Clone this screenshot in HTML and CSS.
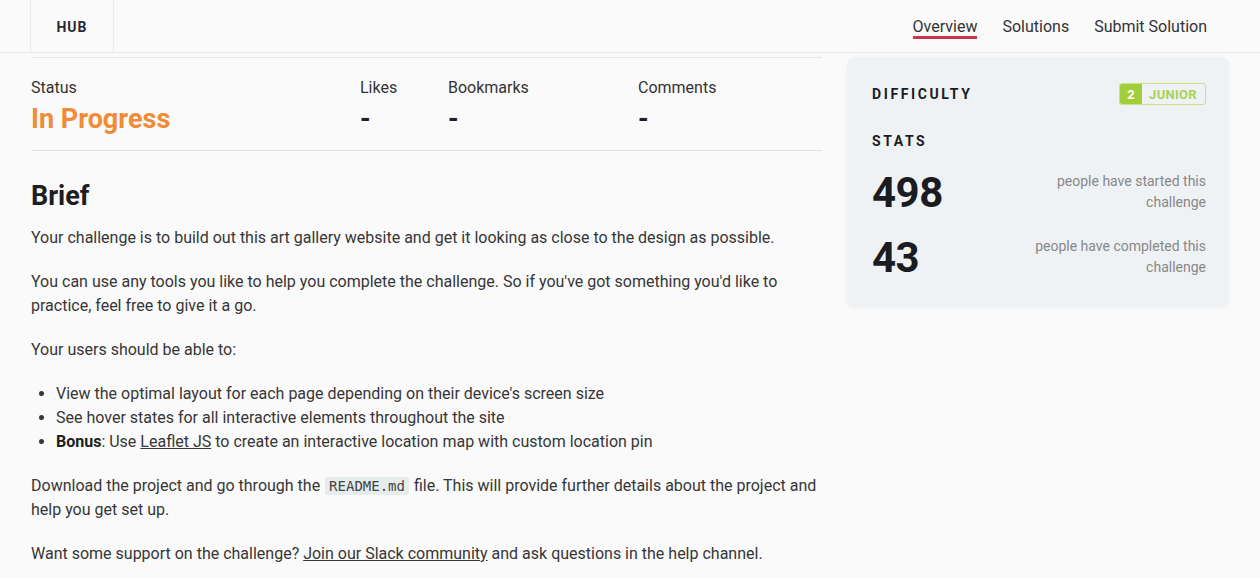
FILE: index.html
```html
<!DOCTYPE html>
<html lang="en">
<head>
<meta charset="utf-8">
<title>Challenge Hub</title>
<link rel="stylesheet" href="styles.css">
</head>
<body>
<header class="topbar">
  <div class="brand">HUB</div>
  <nav class="tabs">
    <a class="tab active" href="#">Overview</a>
    <a class="tab" href="#">Solutions</a>
    <a class="tab" href="#">Submit Solution</a>
  </nav>
</header>
<main class="layout">
  <section class="content">
    <div class="meta">
      <div class="meta-item">
        <div class="meta-label">Status</div>
        <div class="meta-value status">In Progress</div>
      </div>
      <div class="meta-item">
        <div class="meta-label">Likes</div>
        <div class="meta-value">-</div>
      </div>
      <div class="meta-item">
        <div class="meta-label">Bookmarks</div>
        <div class="meta-value">-</div>
      </div>
      <div class="meta-item">
        <div class="meta-label">Comments</div>
        <div class="meta-value">-</div>
      </div>
    </div>
    <article class="brief">
      <h2 class="brief-title">Brief</h2>
      <p>Your challenge is to build out this art gallery website and get it looking as close to the design as possible.</p>
      <p>You can use any tools you like to help you complete the challenge. So if you've got something you'd like to practice, feel free to give it a go.</p>
      <p>Your users should be able to:</p>
      <ul class="list">
        <li>View the optimal layout for each page depending on their device's screen size</li>
        <li>See hover states for all interactive elements throughout the site</li>
        <li><strong>Bonus</strong>: Use <a href="#">Leaflet JS</a> to create an interactive location map with custom location pin</li>
      </ul>
      <p>Download the project and go through the <code>README.md</code> file. This will provide further details about the project and help you get set up.</p>
      <p>Want some support on the challenge? <a href="#">Join our Slack community</a> and ask questions in the help channel.</p>
    </article>
  </section>
  <aside class="card">
    <div class="card-row">
      <h3 class="card-title">Difficulty</h3>
      <div class="badge"><span class="badge-num">2</span><span class="badge-text">JUNIOR</span></div>
    </div>
    <h3 class="card-title stats-title">Stats</h3>
    <div class="stat">
      <div class="stat-num">498</div>
      <div class="stat-text">people have started this challenge</div>
    </div>
    <div class="stat">
      <div class="stat-num">43</div>
      <div class="stat-text">people have completed this challenge</div>
    </div>
  </aside>
</main>
</body>
</html>
```
FILE: styles.css
```css
* { box-sizing: border-box; }
html, body { margin: 0; padding: 0; }
body {
  background: #fafafa;
  font-family: Roboto, "Liberation Sans", Arial, sans-serif;
  color: #333;
}
a { color: inherit; }

.topbar {
  height: 53px;
  display: flex;
  align-items: stretch;
  justify-content: space-between;
  padding: 0 53px 0 30px;
  border-bottom: 1px solid #e6e6e6;
}
.brand {
  width: 84px;
  display: flex;
  align-items: center;
  justify-content: center;
  border-left: 1px solid #ebebeb;
  border-right: 1px solid #ebebeb;
  font-size: 14px;
  font-weight: 700;
  letter-spacing: 1px;
  color: #2a2833;
  padding-top: 1px;
}
.tabs {
  display: flex;
  align-items: center;
  gap: 25px;
}
.tab {
  text-decoration: none;
  font-size: 16px;
  line-height: 18px;
  color: #333;
  padding: 4px 0 0;
  border-bottom: 3px solid transparent;
}
.tab.active {
  border-bottom-color: #c8354d;
}

.layout {
  display: grid;
  grid-template-columns: 1fr 382px;
  gap: 25px;
  padding: 4px 31px 0 31px;
  align-items: start;
}

.meta {
  display: grid;
  grid-template-columns: 329px 88px 190px 1fr;
  border-top: 1px solid #e6e6e6;
  border-bottom: 1px solid #e3e3e3;
  padding: 20px 0 13px;
}
.meta-label {
  font-size: 16px;
  line-height: 20px;
  color: #333;
}
.meta-value {
  font-size: 27px;
  font-weight: 700;
  line-height: 36px;
  color: #1f1f24;
  margin-top: 3px;
}
.meta-value.status {
  color: #f18b37;
}

.brief-title {
  font-size: 27px;
  font-weight: 700;
  color: #1e1e22;
  margin: 29px 0 14px;
  line-height: 32px;
}
.brief p {
  font-size: 16px;
  line-height: 24px;
  margin: 0 0 20px;
  color: #363636;
}
.list {
  margin: 0 0 20px;
  padding-left: 25px;
  font-size: 16px;
  line-height: 24px;
  color: #363636;
}
.list strong { color: #1e1e1e; }
code {
  font-family: "DejaVu Sans Mono", "Liberation Mono", monospace;
  font-size: 14px;
  background: #e6ecec;
  padding: 1px 4px;
  margin: 0 1px;
  border-radius: 2px;
  color: #444;
}

.card {
  background: #eff2f4;
  border-radius: 8px;
  padding: 26px 23px 28px 25px;
  box-shadow: 0 1px 4px rgba(0,0,0,0.03);
}
.card-row {
  display: flex;
  justify-content: space-between;
  align-items: center;
}
.card-title {
  margin: 0;
  font-size: 14px;
  line-height: 20px;
  font-weight: 700;
  letter-spacing: 2.6px;
  text-transform: uppercase;
  color: #1b1b22;
}
.stats-title {
  margin-top: 26px;
}
.badge {
  display: flex;
  height: 22px;
  border: 1.5px solid #c8e28a;
  border-radius: 3px;
  overflow: hidden;
  font-size: 13px;
  font-weight: 700;
}
.badge-num {
  background: #a1cf3c;
  color: #fff;
  width: 22px;
  display: flex;
  align-items: center;
  justify-content: center;
}
.badge-text {
  color: #a9d156;
  padding: 0 8px 0 7px;
  display: flex;
  align-items: center;
  letter-spacing: 0.3px;
}
.stat {
  display: flex;
  justify-content: space-between;
  align-items: flex-start;
  margin-top: 20px;
}
.stat + .stat { margin-top: 21px; }
.stat-num {
  font-size: 42px;
  font-weight: 700;
  line-height: 44px;
  color: #1b1b22;
  letter-spacing: -0.5px;
}
.stat-text {
  width: 180px;
  text-align: right;
  font-size: 14px;
  line-height: 21px;
  color: #888;
}
```
